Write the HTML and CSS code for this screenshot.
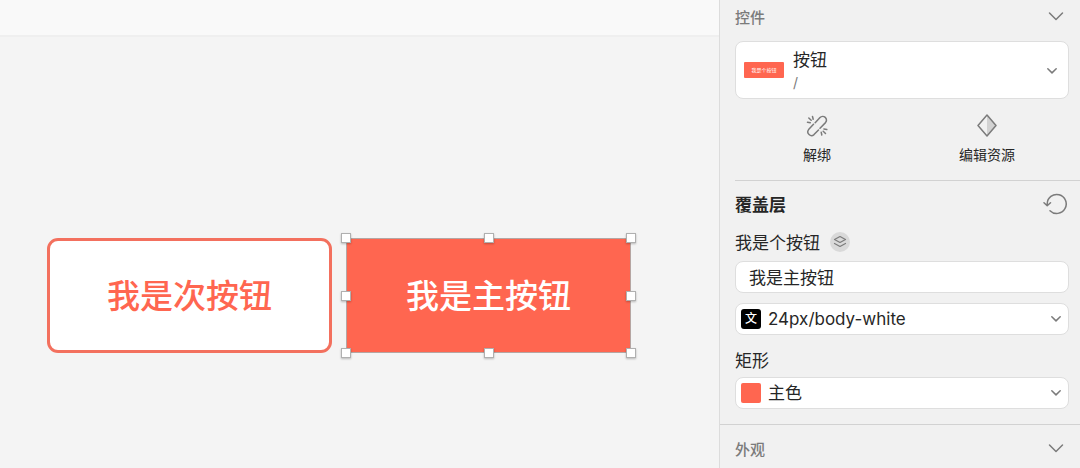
FILE: index.html
```html
<!doctype html>
<html lang="zh-CN">
<head>
    <meta charset="utf-8">
    <title>按钮</title>
    <link rel="stylesheet" href="styles.css">
</head>

<body>
<div class="app">
    <main class="canvas">
        <div class="canvas-ruler"></div>
        <div class="canvas-body">
            <button class="btn btn-secondary">我是次按钮</button>
            <div class="selection">
                <button class="btn btn-primary">我是主按钮</button>
                <i class="handle top left"></i>
                <i class="handle top center"></i>
                <i class="handle top right"></i>
                <i class="handle middle left"></i>
                <i class="handle middle right"></i>
                <i class="handle bottom left"></i>
                <i class="handle bottom center"></i>
                <i class="handle bottom right"></i>
            </div>
        </div>
    </main>

    <aside class="panel">
        <section class="section">
            <button class="section-header">
                控件
                <svg class="chevron" width="16" height="10" viewBox="0 0 16 10"><path d="M1.500 2L8 8.500 14.500 2"/></svg>
            </button>
            <div class="field symbol">
                <select class="select symbol-select" aria-label="控件">
                    <option>按钮</option>
                </select>
                <span class="symbol-thumb">我是个按钮</span>
                <span class="symbol-path">/</span>
                <svg class="arrow symbol-arrow" width="12" height="8" viewBox="0 0 12 8"><path d="M1.800 1.700L6 5.900l4.200-4.200"/></svg>
            </div>
            <div class="actions">
                <button class="action">
                    <svg width="24" height="24" viewBox="0 0 24 24">
                        <path d="M10.200 9.800L15 4.600a3.700 3.700 0 0 1 5.500 5L15 15.200M8.500 11.300L3.600 16.600a3.700 3.700 0 0 0 5.400 5L13.500 17"/>
                        <path d="M7.500 3.500l.7 2.800M3.800 5l2.400 2.300M2.500 9.300l2.800.4M16.800 22l-.6-2.800M20.500 20.500l-2.300-2.200M21.800 16.500l-2.900-.5"/>
                    </svg>
                    解绑
                </button>
                <button class="action">
                    <svg width="24" height="24" viewBox="0 0 24 24">
                        <path class="shade" d="M12 2.500v20l9-10z"/>
                        <path d="M12 2L21 12.500 12 23 3 12.500z"/>
                    </svg>
                    编辑资源
                </button>
            </div>
        </section>

        <section class="section overrides">
            <div class="overrides-header">
                <h2>覆盖层</h2>
                <button class="icon-btn" aria-label="重置">
                    <svg width="24" height="22" viewBox="0 0 24 22">
                        <path d="M4.200 12.500V11a9.500 9.500 0 1 1 2.800 6.700M1 9.800l3.200 3 3.300-3"/>
                    </svg>
                </button>
            </div>
            <div class="row">
                <label for="text">我是个按钮</label>
                <span class="badge">
                    <svg width="14" height="14" viewBox="0 0 14 14">
                        <path d="M7 1.500l5.500 3L7 7.500l-5.500-3zM1.500 8.500L7 11.500l5.500-3"/>
                    </svg>
                </span>
            </div>
            <input class="input" id="text" type="text" value="我是主按钮">
            <div class="field">
                <select class="select" aria-label="文本样式">
                    <option>24px/body-white</option>
                </select>
                <span class="swatch swatch-text">文</span>
                <svg class="arrow" width="12" height="8" viewBox="0 0 12 8"><path d="M1.800 1.700L6 5.900l4.200-4.200"/></svg>
            </div>
            <div class="row">
                <label for="fill">矩形</label>
            </div>
            <div class="field">
                <select class="select" id="fill">
                    <option>主色</option>
                </select>
                <span class="swatch"></span>
                <svg class="arrow" width="12" height="8" viewBox="0 0 12 8"><path d="M1.800 1.700L6 5.900l4.200-4.200"/></svg>
            </div>
        </section>

        <section class="section appearance">
            <button class="section-header">
                外观
                <svg class="chevron" width="16" height="10" viewBox="0 0 16 10"><path d="M1.500 2L8 8.500 14.500 2"/></svg>
            </button>
        </section>
    </aside>
</div>
</body>

</html>
```

FILE: styles.css
```css
* {box-sizing: border-box;}
body {margin: 0; font-family: Inter, "Noto Sans CJK SC", sans-serif; font-size: 17px; color: #262626; background: #f4f4f4;}
button, input, select {font: inherit; color: inherit; margin: 0; padding: 0; border: 0; background: none;}
svg {display: block; fill: none; stroke: #7b7b7b; stroke-width: 1.500; stroke-linecap: round; stroke-linejoin: round;}
.app {display: flex; min-height: 100vh; overflow: hidden;}

.canvas {flex: 1; display: flex; flex-direction: column; min-width: 0;}
.canvas-ruler {height: 37px; background: #f9f9f9; border-bottom: 2px solid #efefef;}
.canvas-body {display: flex; gap: 14px; padding: 201px 0 0 47px;}
.btn {display: block; width: 285px; height: 115px; padding-bottom: 4px; font-size: 33px; font-weight: 500; text-align: center;}
.btn-secondary {color: #ff6650; background: #fff; border: 3px solid #f3705e; border-radius: 11px;}
.btn-primary {color: #fff; background: #ff6650; border-radius: 6px;}
.selection {position: relative; outline: 1px solid #b5a5a2; outline-offset: -1px;}
.handle {position: absolute; width: 10px; height: 10px; background: #fff; border: 1px solid #b0b0b0; box-shadow: 0 1px 2px rgba(0, 0, 0, .25);}
.top {top: -5px;}
.middle {top: calc(50% - 5px);}
.bottom {bottom: -5px;}
.left {left: -5px;}
.center {left: calc(50% - 5px);}
.right {right: -5px;}

.panel {width: 361px; flex: none; background: #f1f1f1; border-left: 1px solid #dcdcdc;}
.section {padding: 0 11px 0 15px;}
.section-header {display: flex; align-items: center; justify-content: space-between; width: 100%; height: 34px; padding: 0 5px 2px 0; font-size: 15px; font-weight: 500; color: #7b7b7b;}
.field {position: relative;}
.input, .select {display: block; width: 100%; height: 32px; background: #fff; border: 1px solid #dedede; border-radius: 8px; outline: 0;}
.input {padding: 0 13px 2px;}
.select {appearance: none; padding: 0 28px 0 32px;}
.arrow {position: absolute; right: 7px; top: 12px; pointer-events: none;}

.symbol {margin-top: 7px;}
.symbol-select {height: 58px; padding: 0 28px 20px 57px;}
.symbol-thumb {position: absolute; left: 9px; top: 21px; width: 40px; height: 16px; border-radius: 1px; background: #ff6650; color: #fff; font-size: 5px; line-height: 16px; text-align: center; pointer-events: none;}
.symbol-path {position: absolute; left: 58px; top: 32px; font-size: 14px; line-height: 20px; color: #7b7b7b; pointer-events: none;}
.symbol-arrow {top: 26px; right: 11px;}
.actions {display: flex; margin-right: -11px; padding: 14px 11px 15px 0; border-bottom: 1px solid #d2d2d2;}
.action {flex: 1; display: flex; flex-direction: column; align-items: center; gap: 8px; font-size: 14px; line-height: 20px;}
.action:first-child {padding-right: 6px;}
.action .shade {fill: #d2d2d2; stroke: none;}

.overrides {padding-bottom: 15px;}
.overrides-header {display: flex; align-items: center; justify-content: space-between; height: 46px; padding-right: 2px;}
.overrides-header h2 {margin: 0; padding-bottom: 2px; font-size: 17px; font-weight: 700;}
.row {display: flex; align-items: center; gap: 10px; height: 24px; margin: 3px 0 7px;}
.row label {padding-bottom: 2px;}
.badge {display: flex; align-items: center; justify-content: center; width: 20px; height: 20px; border-radius: 50%; background: #d9d9d9;}
.badge svg {stroke-width: 1.200;}
.input + .field {margin-top: 10px;}
.field + .row {margin-top: 13px; margin-bottom: 5px;}
.swatch {position: absolute; left: 6px; top: 6px; width: 20px; height: 20px; border-radius: 2px; background: #ff6650; pointer-events: none;}
.swatch-text {border-radius: 3px; background: #000; color: #fff; font-size: 12px; font-weight: 500; line-height: 20px; text-align: center;}
.appearance {border-top: 1px solid #d2d2d2; padding-top: 7px;}
```
